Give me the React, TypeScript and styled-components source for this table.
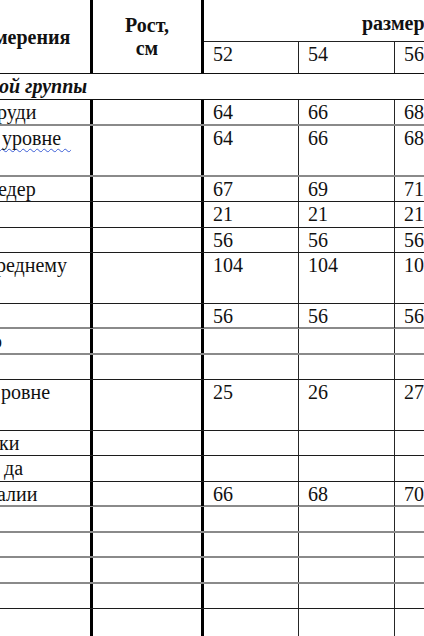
import React from "react";
import styled, { createGlobalStyle } from "styled-components";

const COLS = "93px 111px 95px 96px 96px";

const GlobalStyle = createGlobalStyle`
  body {
    margin: 0;
    background: #ffffff;
    font-family: "Liberation Serif", "Times New Roman", serif;
    color: #111111;
  }
`;

const Sheet = styled.div`
  width: 424px;
  height: 636px;
  overflow: hidden;
  font-size: 20px;
  line-height: 23px;
`;

const HeaderGrid = styled.div`
  display: grid;
  grid-template-columns: ${COLS};
  grid-template-rows: 42px 31px;
  border-bottom: 1px solid #111;
`;

const HeadCell = styled.div<{ $thick?: boolean }>`
  grid-row: 1 / 3;
  display: flex;
  align-items: center;
  font-weight: bold;
  white-space: nowrap;
  border-right: ${(p) => (p.$thick ? "3px solid #000" : "1px solid #222")};
`;

const NameHead = styled(HeadCell)<{ $shift: number }>`
  padding-left: 0;
  text-indent: ${(p) => p.$shift}px;
  padding-top: 2px;
`;

const HeightHead = styled(HeadCell)`
  justify-content: center;
  text-align: center;
`;

const SizeTitle = styled.div`
  grid-column: 3 / -1;
  grid-row: 1;
  border-bottom: 1px solid #222;
  font-weight: bold;
  padding: 12px 0 0 158px;
  white-space: nowrap;
`;

const SizeHead = styled.div`
  grid-row: 2;
  padding: 1px 0 0 9px;
  border-right: 1px solid #222;
`;

const GroupRow = styled.div`
  height: 26px;
  box-sizing: border-box;
  border-bottom: 1px solid #111;
  padding-top: 1px;
  font-weight: bold;
  font-style: italic;
  white-space: nowrap;
`;

const GroupText = styled.span<{ $shift: number }>`
  margin-left: ${(p) => p.$shift}px;
`;

const Row = styled.div<{ $h: number; $soft?: boolean }>`
  display: grid;
  grid-template-columns: ${COLS};
  height: ${(p) => p.$h}px;
  box-sizing: border-box;
  border-bottom: ${(p) => (p.$soft ? "2px solid #8a8a8a" : "1px solid #1c1c1c")};
`;

const Cell = styled.div<{ $thick?: boolean }>`
  padding: 1px 0 0 9px;
  border-right: ${(p) => (p.$thick ? "3px solid #000" : "1px solid #262626")};
  white-space: nowrap;
`;

const NameCell = styled(Cell)<{ $shift: number }>`
  padding-left: 0;
  text-indent: ${(p) => p.$shift}px;
`;

const Marked = styled.span`
  text-decoration: underline wavy #3d5fd6;
  text-decoration-thickness: 1px;
  text-underline-offset: 3px;
  text-decoration-skip-ink: none;
`;

type Measure = {
  name: string;
  shift: number;
  h: number;
  soft?: boolean;
  vals?: string[];
  marked?: boolean;
};

const rows: Measure[] = [
  { name: "руди", shift: -3, h: 25.5, soft: true, vals: ["64", "66", "68"] },
  { name: "\u00a0уровне\u00a0\u00a0", shift: -3, h: 51, soft: true, vals: ["64", "66", "68"], marked: true },
  { name: "едер", shift: -2, h: 25.5, vals: ["67", "69", "71"] },
  { name: "", shift: 0, h: 25.5, vals: ["21", "21", "21"] },
  { name: "", shift: 0, h: 25.5, vals: ["56", "56", "56"] },
  { name: "реднему", shift: -4, h: 50.5, vals: ["104", "104", "104"] },
  { name: "", shift: 0, h: 25.5, soft: true, vals: ["56", "56", "56"] },
  { name: "о", shift: -8, h: 25.5, soft: true },
  { name: "", shift: 0, h: 25.5 },
  { name: "ровне", shift: 1, h: 50.5, vals: ["25", "26", "27"] },
  { name: "ки", shift: -1, h: 25.5 },
  { name: "да", shift: 4, h: 25.5 },
  { name: "алии", shift: -3, h: 25.5, soft: true, vals: ["66", "68", "70"] },
  { name: "", shift: 0, h: 25.5, soft: true },
  { name: "", shift: 0, h: 25.5, soft: true },
  { name: "", shift: 0, h: 25.5, soft: true },
  { name: "", shift: 0, h: 25.5 },
  { name: "", shift: 0, h: 40 },
];

const App = () => {
  return (
    <>
      <GlobalStyle />
      <Sheet>
        <HeaderGrid>
          <NameHead $thick $shift={-6}>мерения</NameHead>
          <HeightHead $thick>
            Рост,
            <br />
            см
          </HeightHead>
          <SizeTitle>размеры</SizeTitle>
          <SizeHead>52</SizeHead>
          <SizeHead>54</SizeHead>
          <SizeHead>56</SizeHead>
        </HeaderGrid>
        <GroupRow>
          <GroupText $shift={-1}>ой группы</GroupText>
        </GroupRow>
        {rows.map((r, i) => (
          <Row key={i} $h={r.h} $soft={r.soft}>
            <NameCell $thick $shift={r.shift}>
              {r.marked ? <Marked>{r.name}</Marked> : r.name}
            </NameCell>
            <Cell $thick />
            <Cell>{r.vals?.[0]}</Cell>
            <Cell>{r.vals?.[1]}</Cell>
            <Cell>{r.vals?.[2]}</Cell>
          </Row>
        ))}
      </Sheet>
    </>
  );
};

export default App;
